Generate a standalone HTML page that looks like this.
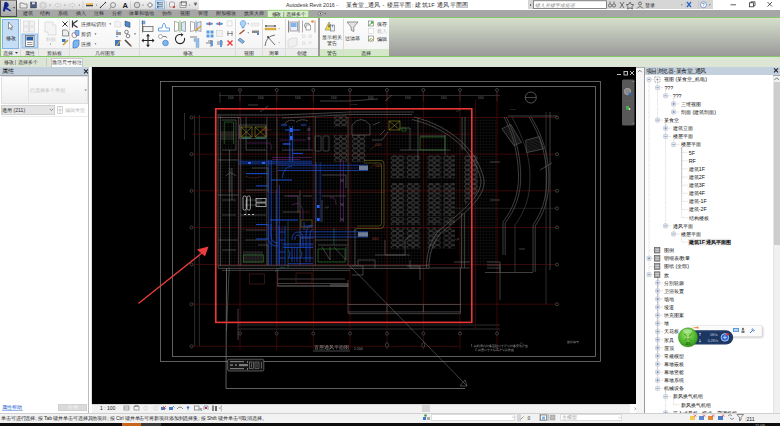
<!DOCTYPE html>
<html><head><meta charset="utf-8">
<style>
*{margin:0;padding:0;box-sizing:border-box}
html,body{width:780px;height:426px;overflow:hidden;background:#fff;font-family:"Liberation Sans",sans-serif;font-size:6px;color:#222}
.a{position:absolute}
text{font-family:"Liberation Sans",sans-serif}
#title{left:0;top:0;width:780px;height:9px;background:#fff}
#app{left:0;top:0;width:16.5px;height:16.5px;background:linear-gradient(#cfcfcf,#a6a6a6);border:1px solid #4a4a4a;border-top-color:#888}
#qat{left:17px;top:0;width:182px;height:9.5px;background:linear-gradient(#f2f2f2,#dcdcdc);border-bottom:1px solid #c4c4c4;border-radius:0 0 3px 0}
#tabs{left:17px;top:9.5px;width:763px;height:8px;background:#a6a6a6}
#ribbon{left:0;top:17px;width:780px;height:40px;background:linear-gradient(#d6dfcc,#9a9a9a);border-top:1px solid #86c96a;border-bottom:1px solid #86c96a}
#opts{left:0;top:57px;width:780px;height:10px;background:#dde5d4}
#props{left:0;top:67px;width:89px;height:346px;background:#fff;border-right:1px solid #bbb}
#canvas{left:91px;top:66px;width:545px;height:338px;background:#ddd}
#pb{left:636px;top:67px;width:144px;height:346px;background:#fff}
#status{left:0;top:412.5px;width:780px;height:10px;background:#f2f2f2;border-top:1px solid #d0d0d0}
#task{left:0;top:422.5px;width:780px;height:4px;background:#0e0e0e}
</style></head><body>
<!--TOP-->
<div id="title" class="a"></div>
<div id="qat" class="a"></div>
<div id="tabs" class="a"></div>
<div id="app" class="a"></div>
<svg class="a" style="left:0;top:0" width="780" height="18" viewBox="0 0 780 18">
<!-- app R -->
<path d="M2.8 11.2 L4.6 2.4 Q6 1.6 7 2.2 Q9 3.2 8.8 5.2 Q8.6 6.8 7 7.5 L11.2 10.4 L10.6 11.6 L5.6 9 L4.8 11.6 Z" fill="#142a94"/><path d="M4.6 2.4 Q6 1.6 7 2.2 L5.4 9 L4.2 11.4z" fill="#0a1a6a" opacity="0.6"/>
<path d="M13 7.3 h2.2 l-1.1 1.3z" fill="#222"/>
<!-- QAT icons -->
<path d="M20 3 h3 l1 1 h3 v4 h-7z" fill="#e8e8e8" stroke="#555" stroke-width="0.6"/>
<rect x="30.5" y="2" width="6" height="6" fill="#4a5a7a" stroke="#333" stroke-width="0.4"/><rect x="32" y="2.3" width="3" height="2" fill="#dde"/>
<path d="M40 3.5 l3 -1.5 l3 1.5 v3.5 l-3 1.5 l-3 -1.5z" fill="#ddd" stroke="#aaa" stroke-width="0.5"/><circle cx="50" cy="5" r="0.5" fill="#555"/>
<path d="M55 5 l2.5 -2 v1.2 h3.5 v2 h-3.5 v1.2z" fill="#eee" stroke="#bbb" stroke-width="0.5"/><circle cx="65" cy="5" r="0.5" fill="#555"/>
<path d="M75 5 l-2.5 -2 v1.2 h-3.5 v2 h3.5 v1.2z" fill="#eee" stroke="#bbb" stroke-width="0.5"/><circle cx="79.5" cy="5" r="0.5" fill="#555"/>
<line x1="83" y1="1" x2="83" y2="8.5" stroke="#c4c4c4" stroke-width="0.6"/>
<rect x="86" y="3.5" width="7" height="1.3" fill="#e8a020"/><rect x="86" y="5" width="7" height="1.3" fill="#445"/><circle cx="96.5" cy="5" r="0.5" fill="#555"/>
<path d="M100.5 7.5 l5 -5" stroke="#333" stroke-width="0.9"/><circle cx="100.5" cy="7.5" r="0.7" fill="#333"/><circle cx="105.5" cy="2.5" r="0.7" fill="#333"/>
<circle cx="113" cy="5" r="2.5" fill="none" stroke="#555" stroke-width="0.6"/><path d="M111 7.5 l-1.5 1" stroke="#555" stroke-width="0.7"/>
<text x="122.5" y="8.2" font-size="7.5" font-weight="bold" fill="#222" font-family="Liberation Sans">A</text>
<line x1="130.5" y1="1" x2="130.5" y2="8.5" stroke="#c4c4c4" stroke-width="0.6"/>
<circle cx="137" cy="5" r="2.8" fill="#d8d8d8" stroke="#555" stroke-width="0.6"/><circle cx="143" cy="5" r="0.5" fill="#555"/>
<path d="M147.5 5 l2.5 -2.5 l2.5 2.5 l-2.5 2.5z" fill="#fff" stroke="#333" stroke-width="0.7"/>
<rect x="155.5" y="0.8" width="9" height="8" fill="#cfe3f8" stroke="#6aa6e6" stroke-width="0.6"/><g stroke="#333" stroke-width="0.6"><line x1="157" y1="2.8" x2="163" y2="2.8"/><line x1="157" y1="4.8" x2="163" y2="4.8"/><line x1="157" y1="6.8" x2="163" y2="6.8"/></g><rect x="157" y="2" width="1.6" height="1.6" fill="#2a5aa0"/><rect x="157" y="6" width="1.6" height="1.6" fill="#2a5aa0"/>
<line x1="166.5" y1="1" x2="166.5" y2="8.5" stroke="#c4c4c4" stroke-width="0.6"/>
<rect x="169.5" y="2" width="5" height="5" rx="1" fill="#eee" stroke="#666" stroke-width="0.5"/><path d="M173 6 l2 2 M175 6 l-2 2" stroke="#e02020" stroke-width="0.8"/>
<rect x="180" y="2.5" width="6" height="5" fill="#eee" stroke="#555" stroke-width="0.5"/><rect x="181.5" y="1.5" width="5" height="4" fill="none" stroke="#555" stroke-width="0.5"/><circle cx="189.5" cy="5" r="0.5" fill="#555"/>
<path d="M194 3.5 h3 l-1.5 2z M194 2.5 h3" stroke="#555" stroke-width="0.4" fill="#555"/>
<!-- title -->
<text x="286" y="7" font-size="5" fill="#333" font-family="Liberation Sans" textLength="52" lengthAdjust="spacingAndGlyphs">Autodesk Revit 2016 -</text>
<text x="346" y="7" font-size="5.8" fill="#333" font-family="Liberation Sans" textLength="122" lengthAdjust="spacing">某食堂_通风 - 楼层平面: 建筑1F 通风平面图</text>
<!-- search -->
<rect x="528" y="0" width="185" height="9" fill="#d6d6d6"/>
<path d="M530 4 l1.5 1 l-1.5 1z" fill="#333"/>
<rect x="533.5" y="0.8" width="73" height="7.8" fill="#fff" stroke="#5a5a5a" stroke-width="0.7"/>
<text x="535" y="6.8" font-size="4.8" font-style="italic" fill="#888" font-family="Liberation Sans" textLength="40.00" lengthAdjust="spacing">键入关键字或短语</text>
<g fill="none" stroke="#444" stroke-width="0.7"><circle cx="610" cy="5.5" r="1.6"/><circle cx="614" cy="5.5" r="1.6"/><path d="M610 3.5 v-2 M614 3.5 v-2"/>
<path d="M620 2 l2 3 l-2 3 M624 2 l-2 3 l2 3"/><path d="M630 2 l1.2 2.4 l2.6 .3 l-1.9 1.8 l.5 2.6 l-2.4 -1.3 l-2.4 1.3 l.5 -2.6 l-1.9 -1.8 l2.6 -.3z"/>
<circle cx="640" cy="3.5" r="1.5"/><path d="M637 8.5 q3 -4 6 0"/></g>
<text x="644.5" y="7" font-size="5" fill="#222" font-family="Liberation Sans" textLength="10.00" lengthAdjust="spacing">登录</text>
<path d="M681 4.5 h1.6 l-.8 1z" fill="#444"/>
<line x1="685.5" y1="1" x2="685.5" y2="8.5" stroke="#bbb" stroke-width="0.5"/>
<path d="M687 2 l4 5 M691 2 l-4 5" stroke="#2a66c4" stroke-width="1.3"/>
<line x1="698.5" y1="1" x2="698.5" y2="8.5" stroke="#bbb" stroke-width="0.5"/>
<circle cx="703.5" cy="4.8" r="3" fill="#fff" stroke="#3a6ab8" stroke-width="0.6"/><text x="702" y="6.6" font-size="4.5" fill="#2a5aa0" font-family="Liberation Sans">?</text>
<path d="M709 4.5 h1.6 l-.8 1z" fill="#444"/>
<!-- window controls -->
<g stroke="#333" stroke-width="0.8" fill="none"><path d="M730.5 4.8 H736"/><rect x="749.5" y="2.8" width="4" height="4"/><path d="M751 2.8 V1.8 H755 V5.8 H753.5"/><path d="M767.5 2 L772 6.5 M772 2 L767.5 6.5"/></g>
<!-- tabs -->
<g font-size="5.3" fill="#2a2a2a" font-family="Liberation Sans">
<text x="22.5" y="15.3" textLength="10.00" lengthAdjust="spacing">建筑</text><text x="40.3" y="15.3" textLength="10.00" lengthAdjust="spacing">结构</text><text x="58" y="15.3" textLength="10.00" lengthAdjust="spacing">系统</text><text x="76" y="15.3" textLength="10.00" lengthAdjust="spacing">插入</text><text x="94" y="15.3" textLength="10.00" lengthAdjust="spacing">注释</text><text x="112" y="15.3" textLength="10.00" lengthAdjust="spacing">分析</text>
<text x="129.3" y="15.3" textLength="25.00" lengthAdjust="spacing">体量和场地</text><text x="162" y="15.3" textLength="10.00" lengthAdjust="spacing">协作</text><text x="180" y="15.3" textLength="10.00" lengthAdjust="spacing">视图</text><text x="197.5" y="15.3" textLength="10.00" lengthAdjust="spacing">管理</text><text x="215.7" y="15.3" textLength="20.00" lengthAdjust="spacing">附加模块</text><text x="243.5" y="15.3" textLength="20.00" lengthAdjust="spacing">族库大师</text>
</g>
<path d="M267.5 17.5 V10.8 Q267.5 10.3 268 10.3 H308 Q308.5 10.3 308.5 10.8 V17.5" fill="#d8ecca" stroke="#8ccf68" stroke-width="0.8"/>
<text x="271.5" y="15.5" font-size="5.3" fill="#2a2a2a" font-family="Liberation Sans" textLength="34.33" lengthAdjust="spacing">修改 | 选择多个</text>
<ellipse cx="320.5" cy="13.5" rx="2.4" ry="1.6" fill="#ddd" stroke="#444" stroke-width="0.5"/><circle cx="320.5" cy="13.5" r="0.7" fill="#333"/><path d="M324.5 13 h1.6 l-.8 1z" fill="#333"/>
</svg>
<!--/TOP-->
<div id="ribbon" class="a"></div>
<svg class="a" style="left:0;top:17px" width="390" height="40" viewBox="0 17 390 40">
<defs>
<linearGradient id="pg" x1="0" y1="0" x2="0" y2="1"><stop offset="0" stop-color="#fdfdfd"/><stop offset="1" stop-color="#f3f3f3"/></linearGradient>
</defs>
<rect x="1" y="18" width="388" height="38" fill="url(#pg)"/>
<rect x="1" y="49" width="317" height="7" fill="#ebebeb"/>
<rect x="320" y="49" width="69" height="7" fill="#d4e7c8"/>
<rect x="318" y="18" width="2" height="38" fill="#9a9a9a"/>
<g stroke="#dadada" stroke-width="1">
<line x1="20.5" y1="19" x2="20.5" y2="56"/><line x1="38.5" y1="19" x2="38.5" y2="56"/><line x1="69.5" y1="19" x2="69.5" y2="56"/>
<line x1="139.5" y1="19" x2="139.5" y2="56"/><line x1="235.5" y1="19" x2="235.5" y2="56"/><line x1="262.5" y1="19" x2="262.5" y2="56"/>
<line x1="285.5" y1="19" x2="285.5" y2="56"/><line x1="343.5" y1="19" x2="343.5" y2="56"/>
</g>
<line x1="1" y1="48.5" x2="318" y2="48.5" stroke="#e0e0e0"/>
<line x1="0.5" y1="17" x2="0.5" y2="57" stroke="#86c96a"/>
<!-- select panel -->
<rect x="2.5" y="19.5" width="16" height="29" fill="#c6ddf6" stroke="#7fb6ea"/>
<path d="M8.5 22 L8.5 29 L10 27.6 L11.3 30 L12.2 29.5 L11 27.2 L13 27 Z" fill="#fff" stroke="#555" stroke-width="0.6"/>
<text x="10.5" y="40" font-size="5.3" text-anchor="middle" fill="#222" textLength="10.00" lengthAdjust="spacing">修改</text>
<text x="2.5" y="54.5" font-size="5" fill="#333" textLength="10.00" lengthAdjust="spacing">选择</text><path d="M15 52 h3 l-1.5 1.8z" fill="#333"/>
<!-- properties -->
<g fill="#f2f2f2" stroke="#d0d0d0" stroke-width="0.6"><rect x="23.5" y="21" width="5" height="5"/><rect x="29.5" y="21" width="5" height="5"/><rect x="23.5" y="27" width="5" height="5"/><rect x="29.5" y="27" width="5" height="5"/></g>
<rect x="22" y="34" width="15.5" height="14" fill="#c6ddf6" stroke="#7fb6ea" stroke-width="0.8"/>
<rect x="25.5" y="35.5" width="8.5" height="11" fill="#fff" stroke="#555" stroke-width="0.7"/>
<rect x="26.5" y="36.5" width="6.5" height="4" fill="#2a5aa0"/>
<g stroke="#555" stroke-width="0.6"><line x1="27" y1="42.5" x2="32.5" y2="42.5"/><line x1="27" y1="44.5" x2="32.5" y2="44.5"/></g>
<text x="29.5" y="54.5" font-size="5" text-anchor="middle" fill="#333" textLength="10.00" lengthAdjust="spacing">属性</text>
<!-- clipboard -->
<path d="M45 22 h8 v3 h3 v10 h-8 v-3 h-3z" fill="#f4f4f4" stroke="#d2d2d2" stroke-width="0.7"/>
<text x="50.5" y="41" font-size="4.5" text-anchor="middle" fill="#c8c8c8" textLength="10.00" lengthAdjust="spacing">粘贴</text>
<circle cx="50.5" cy="44" r="0.6" fill="#666"/>
<path d="M62.5 21.5 l5 5 M67.5 21.5 l-5 5" stroke="#333" stroke-width="1"/>
<path d="M62.5 30 h4 l2 2 v4 h-6z" fill="#eee" stroke="#555" stroke-width="0.6"/>
<rect x="62" y="39" width="3.5" height="3" fill="#3b77c4"/><path d="M63 45 l5-5" stroke="#c8912e" stroke-width="1.2"/>
<text x="54" y="54.5" font-size="5" text-anchor="middle" fill="#333" textLength="15.00" lengthAdjust="spacing">剪贴板</text>
<!-- geometry -->
<path d="M72.5 20.5 v7 M72.5 24 l5 -3.5 M72.5 24 l5 3.5" stroke="#333" stroke-width="1.2" fill="none"/>
<text x="81" y="25.8" font-size="4.7" fill="#333" textLength="25.00" lengthAdjust="spacing">连接端切割</text><path d="M109.2 23.6 h2 l-1 1.2z" fill="#333"/>
<circle cx="74.5" cy="35" r="2.6" fill="#fff" stroke="#555" stroke-width="0.6"/><path d="M75 30.5 h4 v5 h-3z" fill="#7db6ee" stroke="#2d6cbf" stroke-width="0.5"/><line x1="74" y1="33" x2="77" y2="36" stroke="#e33" stroke-width="0.5"/>
<text x="81" y="35.8" font-size="4.7" fill="#333" textLength="10.00" lengthAdjust="spacing">剪切</text><path d="M94.5 33.6 h2 l-1 1.2z" fill="#333"/>
<path d="M73 43 q0 -3 3 -3 h3 v5 q-1 3 -4 3 h-2z" fill="#7db6ee" stroke="#2d6cbf" stroke-width="0.6"/>
<text x="81" y="45.6" font-size="4.7" fill="#333" textLength="10.00" lengthAdjust="spacing">连接</text><path d="M94.5 43.4 h2 l-1 1.2z" fill="#333"/>
<path d="M115 21 h4 l2 2 v4 h-6z" fill="#f3f3f3" stroke="#d8d8d8" stroke-width="0.6"/>
<path d="M125 21 l5 1.5 v5 l-5 -1.5z" fill="#4a8ad4" stroke="#333" stroke-width="0.5"/>
<rect x="116" y="32" width="5" height="3" fill="#999"/><circle cx="117" cy="31" r="0.8" fill="#38f"/><circle cx="117" cy="36.5" r="0.8" fill="#38f"/>
<circle cx="126.5" cy="32" r="1.8" fill="none" stroke="#555" stroke-width="0.7"/><circle cx="128" cy="36" r="1.8" fill="none" stroke="#555" stroke-width="0.7"/><path d="M134 33.6 h2 l-1 1.2z" fill="#333"/>
<rect x="115" y="40" width="5" height="6" fill="#3b77c4"/><path d="M116 46 l5 -6" stroke="#e8a33a" stroke-width="1.1"/>
<path d="M125 40 l3 3 M127 42 l4 4" stroke="#444" stroke-width="1.6"/><path d="M128.5 43.5 l3 3" stroke="#8a4a2a" stroke-width="1"/>
<text x="104.5" y="54.5" font-size="5" text-anchor="middle" fill="#333" textLength="20.00" lengthAdjust="spacing">几何图形</text>
<!-- modify panel -->
<rect x="142" y="21" width="3" height="3" fill="#7db6ee" stroke="#2d6cbf" stroke-width="0.4"/><path d="M142.5 20.5 v12" stroke="#555" stroke-width="0.8"/><rect x="143" y="26.5" width="10" height="5" fill="#f4f4f4" stroke="#555" stroke-width="0.7"/>
<path d="M158.5 31 h11 v-3 h-3.5 q-1 -5 -2 -5 q-1 0 -2 5 h-3.5z" fill="#fff" stroke="#5a9be0" stroke-width="0.9"/>
<path d="M174.5 21.5 v10 l4 -1 v-8z" fill="#fff" stroke="#888" stroke-width="0.7"/><path d="M185.5 21.5 v10 l-4 -1 v-8z" fill="#d8e8f8" stroke="#888" stroke-width="0.7"/><line x1="180" y1="20.5" x2="180" y2="32.5" stroke="#5bb54a" stroke-width="0.8"/>
<path d="M190.5 21.5 v10 l4 -1 v-8z" fill="#fff" stroke="#888" stroke-width="0.7"/><path d="M201 21.5 v10 l-4 -1 v-8z" fill="#d8e8f8" stroke="#888" stroke-width="0.7"/><line x1="196" y1="20.5" x2="196" y2="32.5" stroke="#3a7ad0" stroke-width="0.7"/><path d="M195 31 l6 -5" stroke="#e0a030" stroke-width="1.3"/>
<path d="M148 34.5 v12 M142 40.5 h12" stroke="#222" stroke-width="1.1"/><path d="M148 34 l-2 2.2 h4z M148 47 l-2 -2.2 h4z M141.5 40.5 l2.2 -2 v4z M154.5 40.5 l-2.2 -2 v4z" fill="#222"/>
<circle cx="160.5" cy="36.5" r="2" fill="#fff" stroke="#777" stroke-width="0.6"/><path d="M163 36.5 h3 l1 1.5" stroke="#333" stroke-width="0.6" fill="none"/><circle cx="165.5" cy="43" r="2.8" fill="#7db6ee" stroke="#2d6cbf" stroke-width="0.6"/>
<path d="M184.5 38 a4.6 4.6 0 1 1 -3 -3.3" fill="none" stroke="#222" stroke-width="1.1"/><path d="M181 33 l2.5 1.8 l-2.3 1.7z" fill="#222"/>
<path d="M190 36 h7 v2 h-7z" fill="#bbb"/><path d="M194 38.5 h5 v9 h-3 v-6 h-2z" fill="#8cc0f0" stroke="#999" stroke-width="0.4"/>
<g fill="#5a9be0"><ellipse cx="209.5" cy="23.7" rx="3.5" ry="1.3"/><ellipse cx="219.5" cy="23.7" rx="3.5" ry="1.3"/></g><g fill="#e44"><rect x="209" y="22" width="1" height="3.5"/><rect x="219" y="22" width="1" height="3.5"/></g>
<path d="M227 21 h5 v5 h-5z" fill="none" stroke="#ccc" stroke-width="0.6"/>
<g fill="#5a9be0"><rect x="206.5" y="30.5" width="3" height="3"/><rect x="210.5" y="30.5" width="3" height="3"/><rect x="206.5" y="34.5" width="3" height="3"/><rect x="210.5" y="34.5" width="3" height="3"/></g>
<rect x="216.5" y="30.5" width="6" height="6" fill="#f2f2f2" stroke="#d0d0d0" stroke-width="0.6"/>
<path d="M228 31 v5 M232 31 v5 M227 33.5 h6" stroke="#666" stroke-width="0.7"/>
<path d="M206 43 h7 M208 41 h5 M211 40 v7" stroke="#333" stroke-width="0.6"/><rect x="211" y="41" width="2" height="5" fill="#5a9be0"/>
<path d="M217 42 h6 M217 44 h6" stroke="#333" stroke-width="0.6"/><rect x="220" y="40" width="2" height="7" fill="#5a9be0"/>
<path d="M227.5 40.5 l5 5 M232.5 40.5 l-5 5" stroke="#e33" stroke-width="1.3"/>
<text x="187.5" y="54.5" font-size="5" text-anchor="middle" fill="#333" textLength="10.00" lengthAdjust="spacing">修改</text>
<!-- view panel -->
<path d="M241 21.5 a2.8 2.8 0 1 1 3 4.5 v2 h-2 v-2 a2.8 2.8 0 0 1 -1 -4.5z" fill="#aad4f4" stroke="#3a7ad0" stroke-width="0.5"/><path d="M247.5 23.6 h1.5 l-.75 1z" fill="#333"/>
<path d="M251 23 h8 v3 h-8z" fill="#f0f0f0" stroke="#d8d8d8" stroke-width="0.5"/>
<path d="M239.5 34 l5 -4" stroke="#a0522d" stroke-width="1.5"/><path d="M247.5 32.6 h1.5 l-.75 1z" fill="#333"/>
<rect x="252" y="30.5" width="7" height="2.5" fill="#888"/><circle cx="258" cy="34" r="1" fill="#2860c0"/>
<path d="M240 38 l4.5 3.5 l-2 2 l-4.5 -3.5z" fill="#7db6ee" stroke="#445" stroke-width="0.5"/>
<text x="248.5" y="54.5" font-size="5" text-anchor="middle" fill="#333" textLength="10.00" lengthAdjust="spacing">视图</text>
<!-- measure -->
<path d="M265 26 h11" stroke="#222" stroke-width="0.7"/><path d="M265 26 l1.5 -1 v2z M276 26 l-1.5 -1 v2z" fill="#222"/><rect x="265" y="28" width="11" height="2" fill="#e8b43a" stroke="#a07a20" stroke-width="0.3"/>
<path d="M278.5 28.5 h1.2 l-.6 .8z M278.5 42.5 h1.2 l-.6 .8z" fill="#333"/>
<path d="M265 46 q1 -10 10 -11" fill="none" stroke="#333" stroke-width="0.7"/><path d="M268 37 l7 8" stroke="#333" stroke-width="0.7"/><circle cx="268" cy="37" r="0.9" fill="#333"/>
<text x="273.5" y="54.5" font-size="5" text-anchor="middle" fill="#333" textLength="10.00" lengthAdjust="spacing">测量</text>
<!-- create -->
<path d="M288.5 20.5 v12 M299 20.5 v12" stroke="#555" stroke-width="0.7"/><rect x="290" y="22" width="7.5" height="9" fill="#eef" stroke="#555" stroke-width="0.5"/><rect x="291" y="23" width="5.5" height="4" fill="#7db6ee"/>
<path d="M302.5 20.5 v12 M315 20.5 v12" stroke="#888" stroke-width="0.7"/><circle cx="307" cy="25.5" r="2.5" fill="none" stroke="#555" stroke-width="0.6"/><rect x="306" y="25" width="4.5" height="5" fill="#fff" stroke="#555" stroke-width="0.5"/><circle cx="312.5" cy="21.5" r="1.3" fill="#f28a30"/>
<path d="M288 40 l4 -2 h5 v7 l-4 2 h-5z" fill="#f0f0f0" stroke="#ccc" stroke-width="0.6"/>
<g fill="none" stroke="#c8c8c8" stroke-width="0.5"><rect x="302.5" y="35" width="2.5" height="2.5"/><rect x="309" y="35" width="2.5" height="2.5"/><rect x="302.5" y="42" width="2.5" height="2.5"/><path d="M310 41 l1.5 1.5 l-1.5 1.5 l-1.5 -1.5z"/></g>
<text x="301.5" y="54.5" font-size="5" text-anchor="middle" fill="#333" textLength="10.00" lengthAdjust="spacing">创建</text>
<!-- warnings -->
<path d="M325 30 l4 -8 l4 8z" fill="#f5e04a" stroke="#666" stroke-width="0.5"/><rect x="328.6" y="24.5" width="0.9" height="3" fill="#222"/><rect x="330.5" y="25" width="4" height="6" fill="#e8eef8" stroke="#555" stroke-width="0.5"/><circle cx="332.5" cy="26" r="0.7" fill="#2a60c0"/>
<text x="331.5" y="38.5" font-size="4.8" text-anchor="middle" fill="#333" textLength="20.00" lengthAdjust="spacing">显示相关</text>
<text x="331.5" y="44.5" font-size="4.8" text-anchor="middle" fill="#333" textLength="10.00" lengthAdjust="spacing">警告</text>
<text x="331.5" y="54.5" font-size="5" text-anchor="middle" fill="#333" textLength="10.00" lengthAdjust="spacing">警告</text>
<!-- select2 -->
<path d="M347 22 h11 l-4.2 5 v4.5 l-2.6 -1.2 v-3.3z" fill="#e4e4e4" stroke="#555" stroke-width="0.6"/>
<text x="352.5" y="39.5" font-size="5" text-anchor="middle" fill="#222" textLength="15.00" lengthAdjust="spacing">过滤器</text>
<rect x="368.5" y="21" width="5" height="5" fill="#fff" stroke="#555" stroke-width="0.5"/><path d="M369 25.5 l2.5 -2.5" stroke="#3a3" stroke-width="1"/><rect x="371" y="21.5" width="2" height="2" fill="#3a3"/>
<text x="376.5" y="25.8" font-size="5" fill="#222" textLength="10.00" lengthAdjust="spacing">保存</text>
<rect x="368.5" y="28.5" width="5" height="5" fill="#fff" stroke="#ccc" stroke-width="0.5"/>
<text x="376.5" y="33.3" font-size="5" fill="#bbb" textLength="10.00" lengthAdjust="spacing">载入</text>
<rect x="368.5" y="36" width="5" height="5" fill="#fff" stroke="#555" stroke-width="0.5"/><path d="M369 40.5 l2.5 -2.5" stroke="#3a3" stroke-width="1"/><path d="M370.5 41.5 l3.5 -3.5" stroke="#e0a030" stroke-width="1"/>
<text x="376.5" y="40.8" font-size="5" fill="#222" textLength="10.00" lengthAdjust="spacing">编辑</text>
<text x="366" y="54.5" font-size="5" text-anchor="middle" fill="#222" textLength="10.00" lengthAdjust="spacing">选择</text>
</svg>

<div id="opts" class="a"></div>
<svg class="a" style="left:0;top:57px" width="50" height="10"><text x="3.5" y="6.8" font-size="4.9" fill="#333" textLength="34.00" lengthAdjust="spacing">修改 | 选择多个</text></svg>
<div class="a" style="left:46px;top:58px;width:1px;height:8px;background:#c8c8c8"></div>
<div class="a" style="left:51px;top:58px;width:32px;height:9px;background:#fafafa;border:1px solid #c8c8c8;border-bottom:none"></div><svg class="a" style="left:51px;top:58px" width="32" height="9"><text x="16" y="6.3" font-size="5" fill="#333" text-anchor="middle" textLength="30.00" lengthAdjust="spacing">激活尺寸标注</text></svg>
<!-- properties panel -->
<div id="props" class="a"></div>
<div class="a" style="left:0;top:67px;width:89px;height:8.5px;background:#c3d0de;border-bottom:1.5px solid #a4a8ae"></div>
<svg class="a" style="left:0;top:67px" width="30" height="9"><text x="1.8" y="6.3" font-size="5.5" fill="#222" textLength="12.00" lengthAdjust="spacing">属性</text></svg>
<svg class="a" style="left:82.5px;top:67.5px" width="6" height="6"><path d="M1 1.3 L5 5.3 M5 1.3 L1 5.3" stroke="#222" stroke-width="1.1"/></svg>
<div class="a" style="left:1px;top:76px;width:87px;height:28px;background:linear-gradient(#fdfdfd,#eeeeee);border:1px solid #e0e0e0"></div>
<div class="a" style="left:28px;top:77px;width:1px;height:26px;background:#e4e4e4"></div>
<svg class="a" style="left:28px;top:86px" width="50" height="9"><text x="2" y="5.8" font-size="4.8" fill="#bdbdbd" textLength="35.00" lengthAdjust="spacing">已选择多个类别</text></svg>
<svg class="a" style="left:84px;top:89px" width="4" height="3"><path d="M0.5 0.5 h2.4 l-1.2 1.4z" fill="#777"/></svg>
<div class="a" style="left:1px;top:105px;width:54px;height:10px;background:#e4e4e4;border:1px solid #cfcfcf"></div>
<svg class="a" style="left:0;top:105px" width="50" height="10"><text x="2" y="7" font-size="5.2" fill="#333" textLength="23.17" lengthAdjust="spacing">通用 (211)</text></svg>
<svg class="a" style="left:48.5px;top:108px" width="5" height="4"><path d="M0.8 0.8 l1.7 1.7 l1.7 -1.7" fill="none" stroke="#555" stroke-width="0.6"/></svg>
<svg class="a" style="left:57px;top:106px" width="6" height="8"><rect x="0.5" y="0.5" width="5" height="7" fill="none" stroke="#bbb" stroke-width="0.6"/><line x1="0.5" y1="4" x2="5.5" y2="4" stroke="#bbb" stroke-width="0.6"/><line x1="3" y1="0.5" x2="3" y2="7.5" stroke="#bbb" stroke-width="0.6"/></svg>
<svg class="a" style="left:64px;top:105px" width="25" height="10"><text x="1" y="6.8" font-size="4.8" fill="#bbb" textLength="20.00" lengthAdjust="spacing">编辑类型</text></svg>
<div class="a" style="left:1px;top:116px;width:87px;height:1px;background:#ececec"></div>
<svg class="a" style="left:0;top:403px" width="30" height="9"><text x="2" y="6.3" font-size="5.2" fill="#1a5fd0" textLength="20.00" lengthAdjust="spacing">属性帮助</text><line x1="2" y1="7.4" x2="22.8" y2="7.4" stroke="#1a5fd0" stroke-width="0.5"/></svg>
<div class="a" style="left:58px;top:404px;width:29px;height:7px;background:#dadada;border:1px solid #d0d0d0"></div><svg class="a" style="left:58px;top:404px" width="29" height="7"><text x="14.5" y="5.2" font-size="5" fill="#f4f4f4" text-anchor="middle" textLength="10.00" lengthAdjust="spacing">应用</text></svg>
<!-- canvas -->
<div id="canvas" class="a"></div>
<!--CANVAS-->
<svg class="a" style="left:92px;top:67px;filter:blur(0.3px)" width="544" height="337" viewBox="92 67 544 337">
<defs><pattern id="dg" x="0" y="0" width="3" height="3" patternUnits="userSpaceOnUse"><path d="M0 0.5H3M0.5 0V3" stroke="#121212" stroke-width="0.5"/></pattern>
<pattern id="seat" x="391" y="155.8" width="36.6" height="4.7" patternUnits="userSpaceOnUse"><g fill="none" stroke="#7c7c7c" stroke-width="0.45"><rect x="0.5" y="0.6" width="5.8" height="3.4" rx="1.6"/><rect x="7" y="0.6" width="5.8" height="3.4" rx="1.6"/><rect x="16" y="0.6" width="5.8" height="3.4" rx="1.6"/><rect x="22.5" y="0.6" width="5.8" height="3.4" rx="1.6"/></g></pattern>
<pattern id="seat2" x="334" y="115.5" width="18" height="4.7" patternUnits="userSpaceOnUse"><g fill="none" stroke="#7c7c7c" stroke-width="0.45"><rect x="0.5" y="0.6" width="5.8" height="3.4" rx="1.6"/><rect x="7" y="0.6" width="5.8" height="3.4" rx="1.6"/></g></pattern>
<pattern id="hatch" width="1.8" height="1.8" patternUnits="userSpaceOnUse" patternTransform="rotate(-25)"><path d="M0 0.9H1.8" stroke="#4a4a4a" stroke-width="0.4"/></pattern>
<pattern id="hz" width="2" height="1.5" patternUnits="userSpaceOnUse"><path d="M0 0.75H2" stroke="#5e5e5e" stroke-width="0.45"/></pattern>
</defs>
<rect x="92" y="67" width="544" height="337" fill="#000"/>
<path d="M218 113 H414 C450 125 480 150 484.5 180 C486 200 455 225 440 234 C432 245 429 257 429 268 H218 Z" fill="url(#dg)"/>
<rect x="462" y="117" width="36" height="150" fill="url(#dg)"/>
<g fill="none" stroke="#888" stroke-width="0.7">
<rect x="160.5" y="81.5" width="440" height="280"/>
<rect x="172.5" y="86.5" width="423" height="270"/>
<path d="M226.5 268 L226 388.5 H465"/>
</g>
<g stroke="#585858" stroke-width="0.5" fill="none">
<path d="M219 95.5 H500 M220 92 V103 M240 92 V101 M276.7 92 V101 M313.3 92 V101 M350 92 V101 M387 92 V101 M423.3 92 V101 M460 92 V101 M497 92 V101"/>
<path d="M184.5 113 V140 M194.6 115 V346 M199.3 115 V346"/>
<path d="M238 325 H500 M238 329 H500 M546 112 V304"/>
</g>
<g fill="#6a6a6a" font-size="2.6" font-family="Liberation Sans">
<text x="228" y="98.5">8400</text>
<text x="258" y="98.5">8400</text>
<text x="295" y="98.5">8400</text>
<text x="331" y="98.5">8400</text>
<text x="368" y="98.5">8400</text>
<text x="405" y="98.5">8400</text>
<text x="441" y="98.5">8400</text>
<text x="478" y="98.5">8400</text>
</g>
<g stroke="#520b0b" stroke-width="0.7">
<line x1="240" y1="90" x2="240" y2="350"/>
<line x1="276.7" y1="90" x2="276.7" y2="350"/>
<line x1="313.3" y1="90" x2="313.3" y2="350"/>
<line x1="350" y1="90" x2="350" y2="350"/>
<line x1="387" y1="90" x2="387" y2="350"/>
<line x1="423.3" y1="90" x2="423.3" y2="350"/>
<line x1="460" y1="90" x2="460" y2="350"/>
<line x1="497" y1="90" x2="497" y2="350"/>
<line x1="193" y1="117.5" x2="557" y2="117.5"/>
<line x1="193" y1="154.2" x2="557" y2="154.2"/>
<line x1="193" y1="190.8" x2="557" y2="190.8"/>
<line x1="193" y1="227.5" x2="557" y2="227.5"/>
<line x1="193" y1="264.5" x2="557" y2="264.5"/>
<line x1="193" y1="304.2" x2="557" y2="304.2"/>
<line x1="193" y1="346.3" x2="460" y2="346.3"/>
<line x1="192" y1="134.2" x2="470" y2="134.2"/>
<line x1="475.6" y1="100" x2="475.6" y2="330"/>
</g>
<line x1="455" y1="208.3" x2="557" y2="208.3" stroke="#3a3a3a" stroke-width="0.5"/>
<g fill="#000" stroke="#808080" stroke-width="0.45">
<circle cx="240" cy="90" r="1.5"/>
<circle cx="240" cy="333.5" r="1.5"/>
<circle cx="276.7" cy="90" r="1.5"/>
<circle cx="276.7" cy="333.5" r="1.5"/>
<circle cx="313.3" cy="90" r="1.5"/>
<circle cx="313.3" cy="333.5" r="1.5"/>
<circle cx="350" cy="90" r="1.5"/>
<circle cx="350" cy="333.5" r="1.5"/>
<circle cx="387" cy="90" r="1.5"/>
<circle cx="387" cy="333.5" r="1.5"/>
<circle cx="423.3" cy="90" r="1.5"/>
<circle cx="423.3" cy="333.5" r="1.5"/>
<circle cx="460" cy="90" r="1.5"/>
<circle cx="460" cy="333.5" r="1.5"/>
<circle cx="497" cy="90" r="1.5"/>
<circle cx="497" cy="333.5" r="1.5"/>
<circle cx="191.5" cy="117.5" r="1.5"/>
<circle cx="191.5" cy="154.2" r="1.5"/>
<circle cx="191.5" cy="190.8" r="1.5"/>
<circle cx="191.5" cy="227.5" r="1.5"/>
<circle cx="191.5" cy="264.5" r="1.5"/>
<circle cx="191.5" cy="304.2" r="1.5"/>
<circle cx="191.5" cy="346.3" r="1.5"/>
<circle cx="557" cy="117.5" r="1.5"/>
<circle cx="557" cy="154.2" r="1.5"/>
<circle cx="557" cy="190.8" r="1.5"/>
<circle cx="557" cy="208.3" r="1.5"/>
<circle cx="557" cy="227.5" r="1.5"/>
<circle cx="557" cy="264.5" r="1.5"/>
<circle cx="557" cy="304.2" r="1.5"/>
<ellipse cx="387" cy="345" rx="1.5" ry="2.5"/><ellipse cx="423.3" cy="345" rx="1.5" ry="2.5"/>
</g>
<g fill="none" stroke="#727272" stroke-width="0.55">
<path d="M218 115 H282 L350 112 H414 M218 117.5 H240 M282 118 L350 114.5 H412"/>
<path d="M218 114 V268 M220.5 116 V266"/>
<path d="M218 265.7 H429 M218 268.5 H429 M222 270.4 H350 M277 285.8 H348"/>
<path d="M414 117 C450 126 478 150 484 180 C486 198 462 215 440 234 C432 244 429 256 429 268"/>
<path d="M412 119.5 C448 128 475 152 481 180 C482 197 459 213 437.5 232 C429 243 426.5 256 426.5 268"/>
<path d="M461.5 213 V268 M464.4 213 V268 M462 117 V150 M465 117 V150 M429 268 H470"/>
<path d="M504 117 C512 132 518 152 518.5 175 C519 195 512 210 503 222 V255 M506.2 117 C514.2 132 520.2 152 520.7 175 C521.2 196 514.2 211 505.2 223 V255"/>
<path d="M512 117 C523 138 530 155 530 177 C530 200 524 212 515 225 V272" stroke="#505050"/>
<path d="M529 117 C540 135 546.5 155 546.7 177 C547 200 541 213 533 225 V272 M531.2 117 C542.2 135 548.7 155 548.9 177 C549.2 201 543.2 214 535.2 226 V272"/>
<path d="M550 112 V270 M485 272.5 H533 M508 116 H557 M519 249 H525 M490 162 H500 M490 200 H500 M540 170 L552 163"/>
<path d="M487 262 H500 V272 M487 265 H500 M487 268 H500"/>
<path d="M229.5 150 V265 M232 168 V200 M238.6 117 V265 M240.8 117 V265 M218 160 H238 M218 195 H238 M218 240 H238 M222 120 H236 V150 H222"/>
<path d="M246 117 V150 M239.5 125 H266 V138.6 H239.5 Z M266.8 117 V265 M277 117 V265 M246 190 H266 M240 215 H266 M245 240 H266 M246 200 H262 M246 230 H266 M246 150 H266"/>
<path d="M315.3 117 V265 M300 190.6 V265 M300 238 H313 M283 212 H300 M348 117 V265 M315 240 H348 M245 205 H260"/>
<path d="M282 150 H313"/><path d="M240 192.6 H350 M240 229.6 H350 M350 192.6 H384" stroke="#4a1e1e"/>
<path d="M355 228 V265 M277.7 270 V286 M277.7 279 H345 M277.7 283.5 H348 M277.7 286.2 H348 M229.2 267.4 L226.5 331 M238 308.7 V340 M330 284.4 H349 M330 286 H349"/>
<path d="M348 311.9 H460.7 M348 313.7 H460.7 M348 304.5 H460.7 M348 280 V313 M387 305 V312 M423.3 305 V312 M460.5 268 V313 M352 266 H363 V275 H352 M407 266 H420 V280 M500 265 V300"/>
<path d="M349.7 265.6 L467 386"/>
<path d="M252 168 H268 V192 M246 200 V215 M258 245 H268 V265 M222 200 H236 M222 215 H236 M222 250 H236 M284 196 H298 V212 M303 196 H312 M322 175 H346 V188 M322 196 H346 M322 200 V222 M226 176 Q230 170 236 176"/>
<path d="M352 125 Q361 114 370 125 V135 H352 Z M372 140 H382 L388 132 M373 125 L380 122 M380 135 L385 130"/>
<path d="M385 240 V255 H405 V240 M322 247 L330 260 M330 247 V260 M334 247 L346 260 M346 247 V260 M318 245 H348"/>
<path d="M400 128 H410 V150 M418 118 V160 M445 135 V155 M400 150 H450 M420 136 H446"/>
<path d="M375 255 H410 M358 265 V260 H375 V268 M410 260 V268 H420 M454 262 H470 M405 240 L412 235"/>
<path d="M284 125 Q288 118 295 121 M296 122 Q302 118 308 121 M260 112 L268 106 M248 105 H258 M320 101 H350 M350 101 L378 99 M385 101 L392 95"/>
</g>
<rect x="220" y="131" width="14" height="9" fill="url(#hz)"/>
<rect x="228.5" y="168" width="3" height="24" fill="url(#hz)"/>
<rect x="243" y="251" width="20" height="12" fill="url(#hz)"/>
<rect x="391" y="155.5" width="64" height="23" fill="url(#seat)"/><rect x="391" y="183" width="64" height="33" fill="url(#seat)"/><rect x="391" y="217" width="64" height="8" fill="url(#seat)"/><rect x="391" y="227.5" width="64" height="21" fill="url(#seat)"/>
<path d="M464 155.5 H480 L479 190 L466 204 H464Z" fill="url(#seat)"/>
<rect x="334" y="115.5" width="14" height="11" fill="url(#seat2)"/>
<rect x="334" y="135" width="32" height="27" fill="url(#seat2)"/>
<rect x="313" y="134" width="17" height="19" fill="url(#seat2)" transform="translate(-21 0)" opacity="0"/>
<g fill="none" stroke="#7e7e7e" stroke-width="0.45"><rect x="315" y="136" width="6" height="15" rx="1"/><rect x="323" y="136" width="6" height="15" rx="1"/></g>
<path d="M501.9 128.7 L514.0 145.6 M503.0 128.2 L514.9 145.2 M504.1 127.6 L515.9 144.8 M505.2 127.1 L516.8 144.4 M506.4 126.6 L517.7 144.1 M507.5 126.1 L518.6 143.7 M508.6 125.5 L519.5 143.3 M509.7 125.0 L520.5 142.9 M510.8 124.5 L521.4 142.5 M525.6 140.3 L539.4 136.6 M525.7 141.7 L539.9 138.0 M525.8 143.0 L540.3 139.3 M526.0 144.4 L540.8 140.7 M526.1 145.7 L541.3 142.0 M526.2 147.1 L541.7 143.4 M526.3 148.4 L542.2 144.7 M526.5 149.8 L542.7 146.1 M526.6 151.1 L543.1 147.4 M526.7 152.5 L543.6 148.8" fill="none" stroke="#4c4c4c" stroke-width="0.4"/>
<path d="M501.9 128.7 L510.8 124.5 L521.4 142.5 L514 145.6 Z M525.6 140.3 L539.4 136.6 L543.6 148.8 L526.7 152.5 Z" fill="none" stroke="#6a6a6a" stroke-width="0.5"/>
<g fill="none" stroke="#8a8420" stroke-width="0.6"><rect x="241" y="127" width="11" height="10"/><rect x="255" y="127" width="11" height="10"/><path d="M241 127 L252 137 M252 127 L241 137 M255 127 L266 137 M266 127 L255 137"/>
<rect x="389" y="121" width="11" height="9"/><path d="M389 121 L400 130 M400 121 L389 130"/></g>
<path d="M242 138 H251 M256 138 H265" stroke="#2a9090" stroke-width="0.9"/>
<g fill="none" stroke="#2a8228" stroke-width="0.6"><path d="M224.3 144 V122 H233.5 V144"/><rect x="420" y="137" width="25" height="13"/><rect x="243.3" y="255" width="20" height="7"/><rect x="402" y="128" width="4" height="3"/><rect x="318" y="249" width="27" height="13"/></g>
<g fill="none" stroke="#70287e" stroke-width="0.55"><path d="M247 143 H270 Q273 146 271 150"/><path d="M272 157.5 H312 M272 159.5 H300"/><path d="M340.5 160 V222 M343.5 160 V222"/><path d="M309 126 V150"/><path d="M280 140 H306"/><path d="M292 205 Q300 200 303 210 V220 M288 196 H300 M330 198 Q336 195 336 205"/></g>
<g fill="none" stroke="#8a8a92" stroke-width="0.45"><path d="M307.5 128 l3 3 m0 -3 l-3 3 M307.5 137 l3 3 m0 -3 l-3 3 M340.5 179 l3 3 m0 -3 l-3 3 M340.5 203 l3 3 m0 -3 l-3 3 M340.5 218 l3 3 m0 -3 l-3 3"/></g>
<g fill="none" stroke="#642a1e" stroke-width="0.5"><path d="M267 130 H272 M245 176 Q255 180 262 176 M296 212 H310 M370 150 L376 145 M370 168 L376 163"/><rect x="249.2" y="274" width="15.3" height="10"/><rect x="296" y="273" width="16" height="10"/></g>
<g fill="#9a3a2c" font-size="3" font-family="Liberation Sans"><text x="375" y="146">4000</text><text x="375" y="167">4000</text><text x="261" y="131">4000</text><text x="372" y="240">4000</text></g>
<path d="M364 160.5 H381 Q384 160.5 384 164 V225 Q384 228.5 380 228.5 H357 L353 232" fill="none" stroke="#8a8420" stroke-width="0.5"/>
<path d="M364 163 H379.5 Q381.5 163 381.5 165.5 V223.5 Q381.5 226 378.5 226 H357" fill="none" stroke="#8a8420" stroke-width="0.45"/>
<rect x="301" y="220" width="11" height="7" fill="none" stroke="#8a8420" stroke-width="0.5"/>
<path d="M288 221 V268 M334 228 V245 M275 272 Q280 266 285 268" fill="none" stroke="#1a8080" stroke-width="0.5"/>
<g fill="none" stroke="#1c4ed0">
<path d="M289.8 126 V162 M292.6 126 V162" stroke-width="0.8"/>
<path d="M281 125 H287 M301 125 H306 M283 144 H291 M285 130 H300" stroke-width="1"/>
<path d="M238.3 161.2 H312 M238.3 163.8 H312" stroke-width="0.7"/>
<path d="M278 165.2 H368 M278 170.5 H368" stroke-width="0.7"/>
<path d="M268.7 160 V265 M271.3 160 V265" stroke-width="0.7"/>
<path d="M276.2 190 V265 M279.3 185 V265 M282.4 178 Q283 167 292 166" stroke-width="0.7"/>
<path d="M316.2 162 V222 M320.2 162 V222" stroke-width="0.6"/>
<path d="M246 173.6 H268 M271 180 H292 M256 185.9 H268 M256 224.6 H268 M270 220 H298 M256 239 H268 M283 144 H290 M293 153.4 H303" stroke-width="1"/>
<path d="M300 231.8 H368 M300 237 H368" stroke-width="0.7"/>
</g>
<g fill="none" stroke="#1636a0" stroke-width="0.5"><path d="M278 167.9 H358 M300 234.4 H358 M240 162.5 H312"/></g>
<g fill="#2a62f0"><rect x="290" y="128" width="2.6" height="4"/><rect x="290" y="136" width="2.6" height="4"/><rect x="317" y="205" width="2.6" height="3"/><rect x="317" y="218" width="2.6" height="3"/><rect x="248" y="162" width="3" height="2"/><rect x="262" y="162" width="3" height="2"/></g>
<g fill="none" stroke="#1c4ed0" stroke-width="0.75">
<path d="M268.2 224 V238 Q268.5 246 278 246 M271 224 V236 Q271.5 243 278 243"/>
<path d="M279 226 V265 M285 226 V265 M279 232 H285 M279 240 H285 M279 252 H285 M279 258 H285"/>
<path d="M283 244 H313 M283 247.5 H313 M288 258 H313 M288 263.7 H313"/>
<path d="M292 247 V262 M297 247 V262 M292 240 Q292 232 298 232 Q303 232 303 240 V247 M295 240 Q295 235 298 235 Q300.5 235 300.5 240 V247"/>
<path d="M306 262 V235 Q306 226 312 225 M310 262 V236 Q310 230 313 229 M304 226 H313 M304 222 V230"/>
<path d="M288 250 Q292 254 288 258 M300 250 Q304 254 300 258"/>
</g>
<g fill="none" stroke="#1636a0" stroke-width="0.5"><path d="M282 226 V265 M294.5 247 V262 M308 236 V262 M283 245.8 H313"/></g>
<rect x="359" y="165.6" width="9" height="4.5" fill="#6f7f9a"/><rect x="358" y="232.2" width="10" height="4.4" fill="#6f7f9a"/>
<g fill="none" stroke="#d0d0d0" stroke-width="0.7"><rect x="243" y="196" width="3.4" height="14" rx="1.5"/><rect x="247" y="196" width="3.4" height="14" rx="1.5"/><rect x="256" y="198.5" width="10" height="3.6"/><rect x="256" y="203" width="10" height="3.6"/></g>
<g fill="#c0c0c0"><rect x="244" y="214" width="2" height="1"/><rect x="248" y="214" width="2" height="1"/><rect x="252" y="214" width="2" height="1"/></g>
<g fill="#6a6a6a" font-size="2.4" font-family="Liberation Sans"><text x="350" y="105">±0.000</text><text x="456" y="111" textLength="4.00" lengthAdjust="spacing">屋面</text><text x="510" y="110">2.4m</text><text x="325" y="208" textLength="4.00" lengthAdjust="spacing">会议</text><text x="455" y="240" textLength="4.00" lengthAdjust="spacing">走廊</text><text x="520" y="344" textLength="4.00" lengthAdjust="spacing">图号</text></g>
<circle cx="530.8" cy="97.5" r="5.5" fill="none" stroke="#8a8a8a" stroke-width="0.6"/><line x1="525.3" y1="97.5" x2="536.3" y2="97.5" stroke="#8a8a8a" stroke-width="0.5"/>
<rect x="227.6" y="359.2" width="36.2" height="11.8" rx="1.5" fill="#141414" stroke="#8a8a8a" stroke-width="0.6"/>
<g fill="#7a7a7a"><rect x="230" y="361" width="14" height="1.2"/><rect x="230" y="368" width="14" height="1.2"/><rect x="230" y="364.3" width="3" height="1.5"/><rect x="235" y="364.3" width="2" height="1.5"/><rect x="239" y="364" width="9" height="2.2"/><rect x="247" y="361" width="1" height="2"/><rect x="247" y="368" width="1" height="2"/></g>
<g fill="none" stroke="#8a8a8a" stroke-width="0.6"><rect x="249.5" y="362" width="4" height="6.5"/><rect x="255" y="362" width="4" height="6.5"/><path d="M251.5 363 V367.5 M257 363 V367.5 M261.5 362 V368.5"/></g>
<text x="314" y="349" font-size="5" fill="#8c8c8c" font-family="Liberation Sans" textLength="35.00" lengthAdjust="spacing">首层通风平面图</text><text x="354" y="349.5" font-size="3.5" fill="#8c8c8c" font-family="Liberation Sans">1:100</text>
<line x1="313" y1="351" x2="350" y2="351" stroke="#7a7a7a" stroke-width="0.6"/>
<g fill="#9a9a9a" font-size="3" font-family="Liberation Sans"><text x="471" y="347" textLength="57.34" lengthAdjust="spacing">1.风机房内设备基础尺寸详见设备 安装详图</text><text x="475" y="351" textLength="38.52" lengthAdjust="spacing">2.风管尺寸及标高详见系统图</text><text x="567" y="343" textLength="12.00" lengthAdjust="spacing">图纸编号</text></g>
<path d="M460 386 L465 380 L467 386Z" fill="none" stroke="#808080" stroke-width="0.5"/>
<path d="M139 303 L202 253" stroke="#ec3b3b" stroke-width="1.4" stroke-linecap="round"/>
<path d="M208.5 246.5 L197 249.5 L205 256.5 Z" fill="#ec3b3b"/>
<rect x="215.8" y="108.8" width="256" height="213.6" fill="none" stroke="#ee3535" stroke-width="1.6"/>
<g stroke="#d0d0d0" stroke-width="0.9" fill="none"><path d="M617 74.5 H621"/><rect x="624" y="71.5" width="3.5" height="3.5"/><path d="M630 71 L634 75 M634 71 L630 75"/></g>
<rect x="622" y="79.5" width="12.5" height="46" rx="1.5" fill="#585858"/>
<circle cx="627.5" cy="91.5" r="3.2" fill="#8a8a8a" stroke="#bdbdbd" stroke-width="0.6"/><circle cx="630" cy="94" r="1.5" fill="#2a6ac0"/>
<line x1="623" y1="101" x2="634" y2="101" stroke="#6a6a6a" stroke-width="0.5"/>
<rect x="626" y="106" width="3" height="3.5" fill="#4ab04a"/><circle cx="629.5" cy="109" r="0.9" fill="#ddd"/>
<path d="M632.5 81 l1 1 l1 -1 M632.5 124 l1 -1 l1 1" stroke="#ccc" stroke-width="0.4" fill="none"/>
</svg>
<!--/CANVAS-->
<!-- view control bar + h scroll -->
<div class="a" style="left:92px;top:404px;width:538px;height:9px;background:#f2f2f2;border-top:1px solid #d8d8d8"></div>
<div class="a" style="left:100px;top:405px;font-size:5px;color:#222;line-height:7px">1 : 100</div>
<div class="a" style="left:221px;top:405px;width:1px;height:7px;background:#ccc"></div>
<div class="a" style="left:422px;top:405px;width:8px;height:7px;background:#d6d6d6"></div>
<!-- project browser -->
<div id="pb" class="a"></div>
<div class="a" style="left:636px;top:67px;width:9px;height:346px;background:#f5f5f5;border-right:1px solid #9a9a9a;border-top:1px solid #b0b0b0"></div>
<svg class="a" style="left:636px;top:68px" width="8" height="6"><path d="M1.8 4.2 L3.8 2.2 L5.8 4.2" fill="none" stroke="#444" stroke-width="0.7"/></svg>
<div class="a" style="left:645px;top:67px;width:135px;height:8.5px;background:#c3d0de;border-bottom:1.5px solid #a4a8ae"></div>
<svg class="a" style="left:645px;top:67px" width="70" height="9"><text x="1" y="6.3" font-size="5.6" fill="#1a1a1a" textLength="60" lengthAdjust="spacing">项目浏览器 - 某食堂_通风</text></svg>
<svg class="a" style="left:773px;top:67px" width="6" height="6"><path d="M1 1.3 L5 5.3 M5 1.3 L1 5.3" stroke="#222" stroke-width="1.1"/></svg>
<!--PB-->
<svg class="a" style="left:645px;top:75px" width="128" height="338" viewBox="645 75 128 338">
<rect x="645" y="75" width="128" height="338" fill="#fff"/>
<g fill="none" stroke="#c4c4c4" stroke-width="0.55" stroke-dasharray="0.8 0.5"><path d="M657.6 82.0 V87.63"/><path d="M659.6 87.63 H663.4"/><path d="M665.6 90.13 V95.76"/><path d="M667.6 95.76 H671.7"/><path d="M673.6 98.26 V103.89"/><path d="M675.6 103.89 H680"/><path d="M673.6 98.26 V112.02000000000001"/><path d="M675.6 112.02000000000001 H680"/><path d="M657.6 82.0 V120.15"/><path d="M659.6 120.15 H663.4"/><path d="M665.6 122.65 V128.28"/><path d="M667.6 128.28 H671.7"/><path d="M665.6 122.65 V136.41"/><path d="M667.6 136.41 H671.7"/><path d="M673.6 138.91 V144.54000000000002"/><path d="M675.6 144.54000000000002 H680"/><path d="M681.6 147.04000000000002 V152.67000000000002"/><path d="M681.6 152.67000000000002 H687.7"/><path d="M681.6 147.04000000000002 V160.8"/><path d="M681.6 160.8 H687.7"/><path d="M681.6 147.04000000000002 V168.93"/><path d="M681.6 168.93 H687.7"/><path d="M681.6 147.04000000000002 V177.06"/><path d="M681.6 177.06 H687.7"/><path d="M681.6 147.04000000000002 V185.19"/><path d="M681.6 185.19 H687.7"/><path d="M681.6 147.04000000000002 V193.32"/><path d="M681.6 193.32 H687.7"/><path d="M681.6 147.04000000000002 V201.45000000000002"/><path d="M681.6 201.45000000000002 H687.7"/><path d="M681.6 147.04000000000002 V209.58"/><path d="M681.6 209.58 H687.7"/><path d="M681.6 147.04000000000002 V217.71"/><path d="M681.6 217.71 H687.7"/><path d="M665.6 122.65 V225.84"/><path d="M667.6 225.84 H671.7"/><path d="M673.6 228.34 V233.97000000000003"/><path d="M675.6 233.97000000000003 H680"/><path d="M681.6 236.47000000000003 V242.10000000000002"/><path d="M681.6 242.10000000000002 H687.7"/><path d="M657.6 277.12 V282.75"/><path d="M659.6 282.75 H663.4"/><path d="M657.6 277.12 V290.88"/><path d="M659.6 290.88 H663.4"/><path d="M657.6 277.12 V299.01"/><path d="M659.6 299.01 H663.4"/><path d="M657.6 277.12 V307.14"/><path d="M659.6 307.14 H663.4"/><path d="M657.6 277.12 V315.27"/><path d="M659.6 315.27 H663.4"/><path d="M657.6 277.12 V323.40000000000003"/><path d="M659.6 323.40000000000003 H663.4"/><path d="M657.6 277.12 V331.53000000000003"/><path d="M659.6 331.53000000000003 H663.4"/><path d="M657.6 277.12 V339.66"/><path d="M659.6 339.66 H663.4"/><path d="M657.6 277.12 V347.79"/><path d="M659.6 347.79 H663.4"/><path d="M657.6 277.12 V355.92"/><path d="M659.6 355.92 H663.4"/><path d="M657.6 277.12 V364.05"/><path d="M659.6 364.05 H663.4"/><path d="M657.6 277.12 V372.18"/><path d="M659.6 372.18 H663.4"/><path d="M657.6 277.12 V380.31"/><path d="M659.6 380.31 H663.4"/><path d="M657.6 277.12 V388.44000000000005"/><path d="M659.6 388.44000000000005 H663.4"/><path d="M665.6 390.94000000000005 V396.57000000000005"/><path d="M667.6 396.57000000000005 H671.7"/><path d="M673.6 399.07000000000005 V404.70000000000005"/><path d="M673.6 404.70000000000005 H680"/><path d="M665.6 390.94000000000005 V412.83000000000004"/><path d="M667.6 412.83000000000004 H671.7"/><path d="M649 79.5 V274.62"/><path d="M649 79.5 H654"/><path d="M649 250.23000000000002 H654"/><path d="M649 258.36 H654"/><path d="M649 266.49 H654"/><path d="M649 274.62 H654"/></g>
<rect x="646.9" y="77.4" width="4.2" height="4.2" rx="1" fill="#e4e8ef" stroke="#b0b8c6" stroke-width="0.5"/>
<path d="M647.9 79.5 H650.1" stroke="#3a5aa0" stroke-width="0.5"/>
<rect x="654.8" y="76.9" width="5.2" height="5.2" fill="none" stroke="#666" stroke-width="0.6" stroke-dasharray="1 0.8"/><circle cx="657.4" cy="79.5" r="1" fill="#888"/>
<text x="664" y="81.4" font-size="5.3" fill="#111" font-family="Liberation Sans" textLength="42.95" lengthAdjust="spacing">视图 (某食堂_机电)</text>
<rect x="655.5" y="85.53" width="4.2" height="4.2" rx="1" fill="#e4e8ef" stroke="#b0b8c6" stroke-width="0.5"/>
<path d="M656.5 87.63 H658.7" stroke="#3a5aa0" stroke-width="0.5"/>
<text x="664.4" y="89.53" font-size="5.3" fill="#111" font-family="Liberation Sans">???</text>
<rect x="663.5" y="93.66000000000001" width="4.2" height="4.2" rx="1" fill="#e4e8ef" stroke="#b0b8c6" stroke-width="0.5"/>
<path d="M664.5 95.76 H666.7" stroke="#3a5aa0" stroke-width="0.5"/>
<text x="672.7" y="97.66000000000001" font-size="5.3" fill="#111" font-family="Liberation Sans">???</text>
<rect x="671.5" y="101.79" width="4.2" height="4.2" rx="1" fill="#e4e8ef" stroke="#b0b8c6" stroke-width="0.5"/>
<path d="M672.5 103.89 H674.7" stroke="#3a5aa0" stroke-width="0.5"/>
<path d="M673.6 102.79 V104.99" stroke="#3a5aa0" stroke-width="0.5"/>
<text x="681" y="105.79" font-size="5.3" fill="#111" font-family="Liberation Sans" textLength="20.00" lengthAdjust="spacing">三维视图</text>
<rect x="671.5" y="109.92000000000002" width="4.2" height="4.2" rx="1" fill="#e4e8ef" stroke="#b0b8c6" stroke-width="0.5"/>
<path d="M672.5 112.02000000000001 H674.7" stroke="#3a5aa0" stroke-width="0.5"/>
<path d="M673.6 110.92000000000002 V113.12" stroke="#3a5aa0" stroke-width="0.5"/>
<text x="681" y="113.92000000000002" font-size="5.3" fill="#111" font-family="Liberation Sans" textLength="35.00" lengthAdjust="spacing">剖面 (建筑剖面)</text>
<rect x="655.5" y="118.05000000000001" width="4.2" height="4.2" rx="1" fill="#e4e8ef" stroke="#b0b8c6" stroke-width="0.5"/>
<path d="M656.5 120.15 H658.7" stroke="#3a5aa0" stroke-width="0.5"/>
<text x="664.4" y="122.05000000000001" font-size="5.3" fill="#111" font-family="Liberation Sans" textLength="15.00" lengthAdjust="spacing">某食堂</text>
<rect x="663.5" y="126.18" width="4.2" height="4.2" rx="1" fill="#e4e8ef" stroke="#b0b8c6" stroke-width="0.5"/>
<path d="M664.5 128.28 H666.7" stroke="#3a5aa0" stroke-width="0.5"/>
<path d="M665.6 127.18 V129.38" stroke="#3a5aa0" stroke-width="0.5"/>
<text x="672.7" y="130.18" font-size="5.3" fill="#111" font-family="Liberation Sans" textLength="20.00" lengthAdjust="spacing">建筑立面</text>
<rect x="663.5" y="134.31" width="4.2" height="4.2" rx="1" fill="#e4e8ef" stroke="#b0b8c6" stroke-width="0.5"/>
<path d="M664.5 136.41 H666.7" stroke="#3a5aa0" stroke-width="0.5"/>
<text x="672.7" y="138.31" font-size="5.3" fill="#111" font-family="Liberation Sans" textLength="20.00" lengthAdjust="spacing">楼层平面</text>
<rect x="671.5" y="142.44000000000003" width="4.2" height="4.2" rx="1" fill="#e4e8ef" stroke="#b0b8c6" stroke-width="0.5"/>
<path d="M672.5 144.54000000000002 H674.7" stroke="#3a5aa0" stroke-width="0.5"/>
<text x="681" y="146.44000000000003" font-size="5.3" fill="#111" font-family="Liberation Sans" textLength="20.00" lengthAdjust="spacing">楼层平面</text>
<text x="688.7" y="154.57000000000002" font-size="5.3" fill="#111" font-family="Liberation Sans">5F</text>
<text x="688.7" y="162.70000000000002" font-size="5.3" fill="#111" font-family="Liberation Sans">RF</text>
<text x="688.7" y="170.83" font-size="5.3" fill="#111" font-family="Liberation Sans" textLength="16.19" lengthAdjust="spacing">建筑1F</text>
<text x="688.7" y="178.96" font-size="5.3" fill="#111" font-family="Liberation Sans" textLength="16.19" lengthAdjust="spacing">建筑2F</text>
<text x="688.7" y="187.09" font-size="5.3" fill="#111" font-family="Liberation Sans" textLength="16.19" lengthAdjust="spacing">建筑3F</text>
<text x="688.7" y="195.22" font-size="5.3" fill="#111" font-family="Liberation Sans" textLength="16.19" lengthAdjust="spacing">建筑4F</text>
<text x="688.7" y="203.35000000000002" font-size="5.3" fill="#111" font-family="Liberation Sans" textLength="17.95" lengthAdjust="spacing">建筑-1F</text>
<text x="688.7" y="211.48000000000002" font-size="5.3" fill="#111" font-family="Liberation Sans" textLength="17.95" lengthAdjust="spacing">建筑-2F</text>
<text x="688.7" y="219.61" font-size="5.3" fill="#111" font-family="Liberation Sans" textLength="20.00" lengthAdjust="spacing">结构楼板</text>
<rect x="663.5" y="223.74" width="4.2" height="4.2" rx="1" fill="#e4e8ef" stroke="#b0b8c6" stroke-width="0.5"/>
<path d="M664.5 225.84 H666.7" stroke="#3a5aa0" stroke-width="0.5"/>
<text x="672.7" y="227.74" font-size="5.3" fill="#111" font-family="Liberation Sans" textLength="20.00" lengthAdjust="spacing">通风平面</text>
<rect x="671.5" y="231.87000000000003" width="4.2" height="4.2" rx="1" fill="#e4e8ef" stroke="#b0b8c6" stroke-width="0.5"/>
<path d="M672.5 233.97000000000003 H674.7" stroke="#3a5aa0" stroke-width="0.5"/>
<text x="681" y="235.87000000000003" font-size="5.3" fill="#111" font-family="Liberation Sans" textLength="20.00" lengthAdjust="spacing">楼层平面</text>
<rect x="688" y="238.8" width="43" height="6.6" fill="#e6e6e6"/>
<text x="688.7" y="244.00000000000003" font-size="5.3" font-weight="bold" fill="#111" font-family="Liberation Sans" textLength="42.66" lengthAdjust="spacing">建筑1F 通风平面图</text>
<rect x="654.3" y="247.43" width="5.6" height="5.6" fill="#a0a0a0" stroke="#505050" stroke-width="0.6"/>
<path d="M655.5 249.23000000000002 H659 M655.5 251.23000000000002 H659" stroke="#f4f4f4" stroke-width="0.6"/>
<text x="664" y="252.13000000000002" font-size="5.3" fill="#111" font-family="Liberation Sans" textLength="10.00" lengthAdjust="spacing">图例</text>
<rect x="646.9" y="256.26" width="4.2" height="4.2" rx="1" fill="#e4e8ef" stroke="#b0b8c6" stroke-width="0.5"/>
<path d="M647.9 258.36 H650.1" stroke="#3a5aa0" stroke-width="0.5"/>
<path d="M649 257.26 V259.46000000000004" stroke="#3a5aa0" stroke-width="0.5"/>
<rect x="654.3" y="255.56" width="5.6" height="5.6" fill="#a0a0a0" stroke="#505050" stroke-width="0.6"/>
<path d="M655.5 257.36 H659 M655.5 259.36 H659" stroke="#f4f4f4" stroke-width="0.6"/>
<text x="664" y="260.26" font-size="5.3" fill="#111" font-family="Liberation Sans" textLength="26.48" lengthAdjust="spacing">明细表/数量</text>
<rect x="654.3" y="263.69" width="5.6" height="5.6" fill="#a0a0a0" stroke="#505050" stroke-width="0.6"/>
<path d="M655.5 265.49 H659 M655.5 267.49 H659" stroke="#f4f4f4" stroke-width="0.6"/>
<text x="664" y="268.39" font-size="5.3" fill="#111" font-family="Liberation Sans" textLength="25.00" lengthAdjust="spacing">图纸 (全部)</text>
<rect x="646.9" y="272.52" width="4.2" height="4.2" rx="1" fill="#e4e8ef" stroke="#b0b8c6" stroke-width="0.5"/>
<path d="M647.9 274.62 H650.1" stroke="#3a5aa0" stroke-width="0.5"/>
<rect x="654.3" y="271.82" width="5.6" height="5.6" fill="#a0a0a0" stroke="#505050" stroke-width="0.6"/>
<path d="M655.5 273.62 H659 M655.5 275.62 H659" stroke="#f4f4f4" stroke-width="0.6"/>
<text x="664" y="276.52" font-size="5.3" fill="#111" font-family="Liberation Sans" textLength="5.00" lengthAdjust="spacing">族</text>
<rect x="655.5" y="280.65" width="4.2" height="4.2" rx="1" fill="#e4e8ef" stroke="#b0b8c6" stroke-width="0.5"/>
<path d="M656.5 282.75 H658.7" stroke="#3a5aa0" stroke-width="0.5"/>
<path d="M657.6 281.65 V283.85" stroke="#3a5aa0" stroke-width="0.5"/>
<text x="664.4" y="284.65" font-size="5.3" fill="#111" font-family="Liberation Sans" textLength="20.00" lengthAdjust="spacing">分割轮廓</text>
<rect x="655.5" y="288.78" width="4.2" height="4.2" rx="1" fill="#e4e8ef" stroke="#b0b8c6" stroke-width="0.5"/>
<path d="M656.5 290.88 H658.7" stroke="#3a5aa0" stroke-width="0.5"/>
<path d="M657.6 289.78 V291.98" stroke="#3a5aa0" stroke-width="0.5"/>
<text x="664.4" y="292.78" font-size="5.3" fill="#111" font-family="Liberation Sans" textLength="20.00" lengthAdjust="spacing">卫浴装置</text>
<rect x="655.5" y="296.90999999999997" width="4.2" height="4.2" rx="1" fill="#e4e8ef" stroke="#b0b8c6" stroke-width="0.5"/>
<path d="M656.5 299.01 H658.7" stroke="#3a5aa0" stroke-width="0.5"/>
<path d="M657.6 297.90999999999997 V300.11" stroke="#3a5aa0" stroke-width="0.5"/>
<text x="664.4" y="300.90999999999997" font-size="5.3" fill="#111" font-family="Liberation Sans" textLength="10.00" lengthAdjust="spacing">场地</text>
<rect x="655.5" y="305.03999999999996" width="4.2" height="4.2" rx="1" fill="#e4e8ef" stroke="#b0b8c6" stroke-width="0.5"/>
<path d="M656.5 307.14 H658.7" stroke="#3a5aa0" stroke-width="0.5"/>
<path d="M657.6 306.03999999999996 V308.24" stroke="#3a5aa0" stroke-width="0.5"/>
<text x="664.4" y="309.03999999999996" font-size="5.3" fill="#111" font-family="Liberation Sans" textLength="10.00" lengthAdjust="spacing">坡道</text>
<rect x="655.5" y="313.16999999999996" width="4.2" height="4.2" rx="1" fill="#e4e8ef" stroke="#b0b8c6" stroke-width="0.5"/>
<path d="M656.5 315.27 H658.7" stroke="#3a5aa0" stroke-width="0.5"/>
<path d="M657.6 314.16999999999996 V316.37" stroke="#3a5aa0" stroke-width="0.5"/>
<text x="664.4" y="317.16999999999996" font-size="5.3" fill="#111" font-family="Liberation Sans" textLength="20.00" lengthAdjust="spacing">填充图案</text>
<rect x="655.5" y="321.3" width="4.2" height="4.2" rx="1" fill="#e4e8ef" stroke="#b0b8c6" stroke-width="0.5"/>
<path d="M656.5 323.40000000000003 H658.7" stroke="#3a5aa0" stroke-width="0.5"/>
<path d="M657.6 322.3 V324.50000000000006" stroke="#3a5aa0" stroke-width="0.5"/>
<text x="664.4" y="325.3" font-size="5.3" fill="#111" font-family="Liberation Sans" textLength="5.00" lengthAdjust="spacing">墙</text>
<rect x="655.5" y="329.43" width="4.2" height="4.2" rx="1" fill="#e4e8ef" stroke="#b0b8c6" stroke-width="0.5"/>
<path d="M656.5 331.53000000000003 H658.7" stroke="#3a5aa0" stroke-width="0.5"/>
<path d="M657.6 330.43 V332.63000000000005" stroke="#3a5aa0" stroke-width="0.5"/>
<text x="664.4" y="333.43" font-size="5.3" fill="#111" font-family="Liberation Sans" textLength="15.00" lengthAdjust="spacing">天花板</text>
<rect x="655.5" y="337.56" width="4.2" height="4.2" rx="1" fill="#e4e8ef" stroke="#b0b8c6" stroke-width="0.5"/>
<path d="M656.5 339.66 H658.7" stroke="#3a5aa0" stroke-width="0.5"/>
<path d="M657.6 338.56 V340.76000000000005" stroke="#3a5aa0" stroke-width="0.5"/>
<text x="664.4" y="341.56" font-size="5.3" fill="#111" font-family="Liberation Sans" textLength="10.00" lengthAdjust="spacing">家具</text>
<rect x="655.5" y="345.69" width="4.2" height="4.2" rx="1" fill="#e4e8ef" stroke="#b0b8c6" stroke-width="0.5"/>
<path d="M656.5 347.79 H658.7" stroke="#3a5aa0" stroke-width="0.5"/>
<path d="M657.6 346.69 V348.89000000000004" stroke="#3a5aa0" stroke-width="0.5"/>
<text x="664.4" y="349.69" font-size="5.3" fill="#111" font-family="Liberation Sans" textLength="10.00" lengthAdjust="spacing">屋顶</text>
<rect x="655.5" y="353.82" width="4.2" height="4.2" rx="1" fill="#e4e8ef" stroke="#b0b8c6" stroke-width="0.5"/>
<path d="M656.5 355.92 H658.7" stroke="#3a5aa0" stroke-width="0.5"/>
<path d="M657.6 354.82 V357.02000000000004" stroke="#3a5aa0" stroke-width="0.5"/>
<text x="664.4" y="357.82" font-size="5.3" fill="#111" font-family="Liberation Sans" textLength="20.00" lengthAdjust="spacing">常规模型</text>
<rect x="655.5" y="361.95" width="4.2" height="4.2" rx="1" fill="#e4e8ef" stroke="#b0b8c6" stroke-width="0.5"/>
<path d="M656.5 364.05 H658.7" stroke="#3a5aa0" stroke-width="0.5"/>
<path d="M657.6 362.95 V365.15000000000003" stroke="#3a5aa0" stroke-width="0.5"/>
<text x="664.4" y="365.95" font-size="5.3" fill="#111" font-family="Liberation Sans" textLength="20.00" lengthAdjust="spacing">幕墙嵌板</text>
<rect x="655.5" y="370.08" width="4.2" height="4.2" rx="1" fill="#e4e8ef" stroke="#b0b8c6" stroke-width="0.5"/>
<path d="M656.5 372.18 H658.7" stroke="#3a5aa0" stroke-width="0.5"/>
<path d="M657.6 371.08 V373.28000000000003" stroke="#3a5aa0" stroke-width="0.5"/>
<text x="664.4" y="374.08" font-size="5.3" fill="#111" font-family="Liberation Sans" textLength="20.00" lengthAdjust="spacing">幕墙竖梃</text>
<rect x="655.5" y="378.21" width="4.2" height="4.2" rx="1" fill="#e4e8ef" stroke="#b0b8c6" stroke-width="0.5"/>
<path d="M656.5 380.31 H658.7" stroke="#3a5aa0" stroke-width="0.5"/>
<path d="M657.6 379.21 V381.41" stroke="#3a5aa0" stroke-width="0.5"/>
<text x="664.4" y="382.21" font-size="5.3" fill="#111" font-family="Liberation Sans" textLength="20.00" lengthAdjust="spacing">幕墙系统</text>
<rect x="655.5" y="386.34000000000003" width="4.2" height="4.2" rx="1" fill="#e4e8ef" stroke="#b0b8c6" stroke-width="0.5"/>
<path d="M656.5 388.44000000000005 H658.7" stroke="#3a5aa0" stroke-width="0.5"/>
<text x="664.4" y="390.34000000000003" font-size="5.3" fill="#111" font-family="Liberation Sans" textLength="20.00" lengthAdjust="spacing">机械设备</text>
<rect x="663.5" y="394.47" width="4.2" height="4.2" rx="1" fill="#e4e8ef" stroke="#b0b8c6" stroke-width="0.5"/>
<path d="M664.5 396.57000000000005 H666.7" stroke="#3a5aa0" stroke-width="0.5"/>
<text x="672.7" y="398.47" font-size="5.3" fill="#111" font-family="Liberation Sans" textLength="30.00" lengthAdjust="spacing">新风换气机组</text>
<text x="681" y="406.6" font-size="5.3" fill="#111" font-family="Liberation Sans" textLength="30.00" lengthAdjust="spacing">新风换气机组</text>
<rect x="663.5" y="410.73" width="4.2" height="4.2" rx="1" fill="#e4e8ef" stroke="#b0b8c6" stroke-width="0.5"/>
<path d="M664.5 412.83000000000004 H666.7" stroke="#3a5aa0" stroke-width="0.5"/>
<path d="M665.6 411.73 V413.93000000000006" stroke="#3a5aa0" stroke-width="0.5"/>
<text x="672.7" y="414.73" font-size="5.3" fill="#111" font-family="Liberation Sans" textLength="64.42" lengthAdjust="spacing">嵌入式风机 - 模式 - 空调机组</text>
</svg>
<!--/PB-->
<div class="a" style="left:773px;top:76px;width:7px;height:337px;background:#f0f0f0;border-left:1px solid #e6e6e6"></div>
<div class="a" style="left:774px;top:82px;width:6px;height:163px;background:#cdcdcd"></div>
<svg class="a" style="left:773px;top:76px" width="7" height="6"><path d="M1.5 4 L3.7 1.8 L5.9 4" fill="none" stroke="#444" stroke-width="0.7"/></svg>
<div id="status" class="a"></div>
<svg class="a" style="left:0;top:413px" width="300" height="9"><text x="1" y="6.8" font-size="5.05" fill="#222" textLength="266" lengthAdjust="spacing">单击可进行选择; 按 Tab 键并单击可选择其他项目; 按 Ctrl 键并单击可将新项目添加到选择集; 按 Shift 键并单击可取消选择。</text></svg>
<div class="a" style="left:431px;top:414px;width:84px;height:7px;background:#fff;border:1px solid #ddd"></div>
<div class="a" style="left:560px;top:414px;width:62px;height:7px;background:#fff;border:1px solid #ddd"></div>
<svg class="a" style="left:560px;top:414px" width="30" height="7"><text x="2" y="5.3" font-size="5" fill="#999" textLength="15.00" lengthAdjust="spacing">主模型</text></svg>
<div id="task" class="a"></div>
<div class="a" style="left:122px;top:422.5px;width:19px;height:4px;background:#c8661c"></div>
<div class="a" style="left:141px;top:422.5px;width:20px;height:4px;background:#383838"></div>
<!--ST-->
<svg class="a" style="left:92px;top:404px" width="688" height="22" viewBox="92 404 688 22">
<g fill="none" stroke="#555" stroke-width="0.5">
<rect x="124" y="406" width="5" height="4"/><path d="M124 408 H129"/>
<rect x="134" y="406.5" width="5" height="3.5"/><path d="M135 406.5 V405.5 H138 V406.5"/>
</g>
<g fill="none" stroke="#bbb" stroke-width="0.5"><circle cx="145.5" cy="408.2" r="1.8"/><circle cx="155.5" cy="408.2" r="1.8"/><path d="M158 406 l1 -1"/></g>
<path d="M161 407 h4 v3 h-4z" fill="#4a7ac8"/><path d="M163 406 l3 3 M166 406 l-3 3" stroke="#e03030" stroke-width="0.7"/>
<path d="M169 407 h4 v3 h-4z" fill="#4a7ac8"/><path d="M173 406 l1.5 1.5" stroke="#2a5aa0" stroke-width="0.7"/>
<path d="M177 409 q3 -4 6 0" fill="none" stroke="#555" stroke-width="0.7"/>
<circle cx="188" cy="407.5" r="1.2" fill="#3a7ad0"/><path d="M188 408.7 V410.5" stroke="#3a7ad0" stroke-width="0.5"/>
<rect x="194.5" y="406" width="4.5" height="4" fill="none" stroke="#444" stroke-width="0.5"/><text x="199.5" y="410.5" font-size="3.8" fill="#333" font-family="Liberation Sans">R</text>
<path d="M204 410 v-4 h4 v4" fill="none" stroke="#4a6ab0" stroke-width="0.6"/><rect x="205" y="407" width="2" height="2" fill="#d03030"/>
<rect x="212" y="405.5" width="2" height="5.5" fill="#888"/><rect x="215" y="406" width="2" height="5" fill="#666"/>
<path d="M221 406.5 l-1.5 1.5 l1.5 1.5" fill="none" stroke="#333" stroke-width="0.5"/>
<!-- right scrollbar of canvas -->
<path d="M638.5 402 l1.5 1.3 l1.5 -1.3" fill="none" stroke="#444" stroke-width="0.5"/>
<path d="M634.5 407.5 l1.3 1.2 l-1.3 1.2" fill="none" stroke="#444" stroke-width="0.5"/>
<!-- status bar right -->
<path d="M423 417 h3 v3 h-3z" fill="#3a7ad0"/><circle cx="425.5" cy="415.5" r="1.3" fill="#3aa03a"/><rect x="427" y="417" width="3" height="3" fill="#aaa"/>
<path d="M512 416.5 l1.3 1.2 l1.3 -1.2" fill="none" stroke="#888" stroke-width="0.4"/>
<rect x="517" y="413.5" width="4" height="8" fill="#d6d6d6"/>
<path d="M520.5 419.5 l3 -3" stroke="#777" stroke-width="0.7"/><text x="526.5" y="419.5" font-size="4.5" fill="#333" font-family="Liberation Sans">:0</text>
<rect x="539" y="414" width="10" height="7" fill="#c8c8c8"/><rect x="540.5" y="415" width="6" height="5" fill="#fff" stroke="#444" stroke-width="0.5"/><rect x="542" y="416.5" width="3" height="3" fill="#7db6ee"/>
<rect x="550" y="415" width="5" height="5" fill="#bbb" stroke="#888" stroke-width="0.4"/>
<path d="M618.5 417 l1.3 1.2 l1.3 -1.2" fill="none" stroke="#888" stroke-width="0.4"/>
<g>
<rect x="690" y="416" width="5" height="4" fill="#f0c030" opacity="0.8"/><path d="M694 414.5 l2.2 2.2 M696.2 414.5 l-2.2 2.2" stroke="#e02020" stroke-width="0.6"/>
<rect x="699" y="416" width="5" height="4" fill="#5a8ad0"/><path d="M703 414.5 l2.2 2.2 M705.2 414.5 l-2.2 2.2" stroke="#e02020" stroke-width="0.6"/>
<rect x="708" y="416" width="5" height="4" fill="#e08a40"/><path d="M712 414.5 l2.2 2.2 M714.2 414.5 l-2.2 2.2" stroke="#e02020" stroke-width="0.6"/>
<rect x="718" y="416" width="5" height="4" fill="#4a7ac8"/><path d="M722 414.5 l2.2 2.2 M724.2 414.5 l-2.2 2.2" stroke="#e02020" stroke-width="0.6"/>
<path d="M728 416 l2 -1.5 l2 1.5 M730 418 l2 1.5 l2 -1.5" fill="none" stroke="#444" stroke-width="0.6"/>
<path d="M737 414.5 h6.5 l-2.5 3 v2.5 l-1.5 .8 v-3.3z" fill="none" stroke="#444" stroke-width="0.6"/>
<text x="745" y="421" font-size="5.2" fill="#222" font-family="Liberation Sans">:211</text>
</g>
<text x="755" y="426.5" font-size="4" fill="#ccc" font-family="Liberation Sans">11:09</text>
</svg>

<!--/ST-->
<!--WG-->
<svg class="a" style="left:670px;top:318px" width="100" height="34" viewBox="670 318 100 34">
<defs>
<radialGradient id="gb" cx="0.45" cy="0.35" r="0.7"><stop offset="0" stop-color="#9be86a"/><stop offset="0.6" stop-color="#4fb82e"/><stop offset="1" stop-color="#2f8a1a"/></radialGradient>
<filter id="sh" x="-20%" y="-40%" width="140%" height="180%"><feGaussianBlur stdDeviation="0.8"/></filter>
</defs>
<rect x="691" y="326.5" width="72" height="11" rx="1.5" fill="#000" opacity="0.25" filter="url(#sh)"/>
<rect x="690" y="325.5" width="72" height="11" rx="1.5" fill="#fbfbfb" stroke="#e0e0e0" stroke-width="0.5"/>
<path d="M692 328 l6 -1.5 l1 2 z" fill="#f08a3a"/>
<rect x="733" y="328" width="6" height="4" fill="#5a9ae0"/><rect x="734" y="329" width="4" height="0.6" fill="#fff"/><rect x="734" y="330.5" width="4" height="0.6" fill="#fff"/>
<circle cx="743" cy="329" r="1.2" fill="#777"/><rect x="741.5" y="330.5" width="3" height="2.5" fill="#777"/>
<path d="M750 333 l3.5 -3.5 M752.5 328.5 a1.4 1.4 0 1 0 2 2" stroke="#3a7ad0" stroke-width="1" fill="none"/>
<path d="M694.6 330.3 H726 a7.15 7.15 0 0 1 0 14.3 H694.6z" fill="#1c3662"/>
<path d="M696 331.5 H726 a6 6 0 0 1 0 12 H696" fill="none" stroke="#4a6a9a" stroke-width="0.3" stroke-dasharray="0.6 0.6"/>
<path d="M700 333 v3 M699 334 l1 -1.2 l1 1.2" stroke="#dfe8f4" stroke-width="0.5" fill="none"/>
<path d="M700 339 v3 M699 341 l1 1.2 l1 -1.2" stroke="#dfe8f4" stroke-width="0.5" fill="none"/>
<text x="717.5" y="335.5" font-size="3.6" fill="#c8d4e4" text-anchor="end" font-family="Liberation Sans">0K/s</text>
<text x="718" y="341.7" font-size="3.6" fill="#c8d4e4" text-anchor="end" font-family="Liberation Sans">0.2K/s</text>
<circle cx="724.9" cy="337.4" r="3.8" fill="#2a6ad8" stroke="#e8eef8" stroke-width="0.7"/>
<path d="M723 337.4 h3.8 M724.9 335.5 v3.8" stroke="#fff" stroke-width="0.6"/>
<circle cx="727.5" cy="334.3" r="1.2" fill="#e82a2a"/>
<circle cx="688" cy="337.4" r="9.6" fill="url(#gb)" stroke="#3a8a22" stroke-width="0.5"/>
<ellipse cx="687.5" cy="331" rx="4.5" ry="2" fill="#fff" opacity="0.35"/>
<path d="M684.5 334 l7 7 M691.5 334 l-7 7" stroke="#2a3a1a" stroke-width="0.9" stroke-dasharray="1.2 0.8"/>
<circle cx="688" cy="337.5" r="1" fill="#e8e0b0"/>
<text x="688" y="345" font-size="2.6" fill="#1a2a10" text-anchor="middle" font-family="Liberation Sans">26%</text>
</svg>

<!--/WG-->
</body></html>
